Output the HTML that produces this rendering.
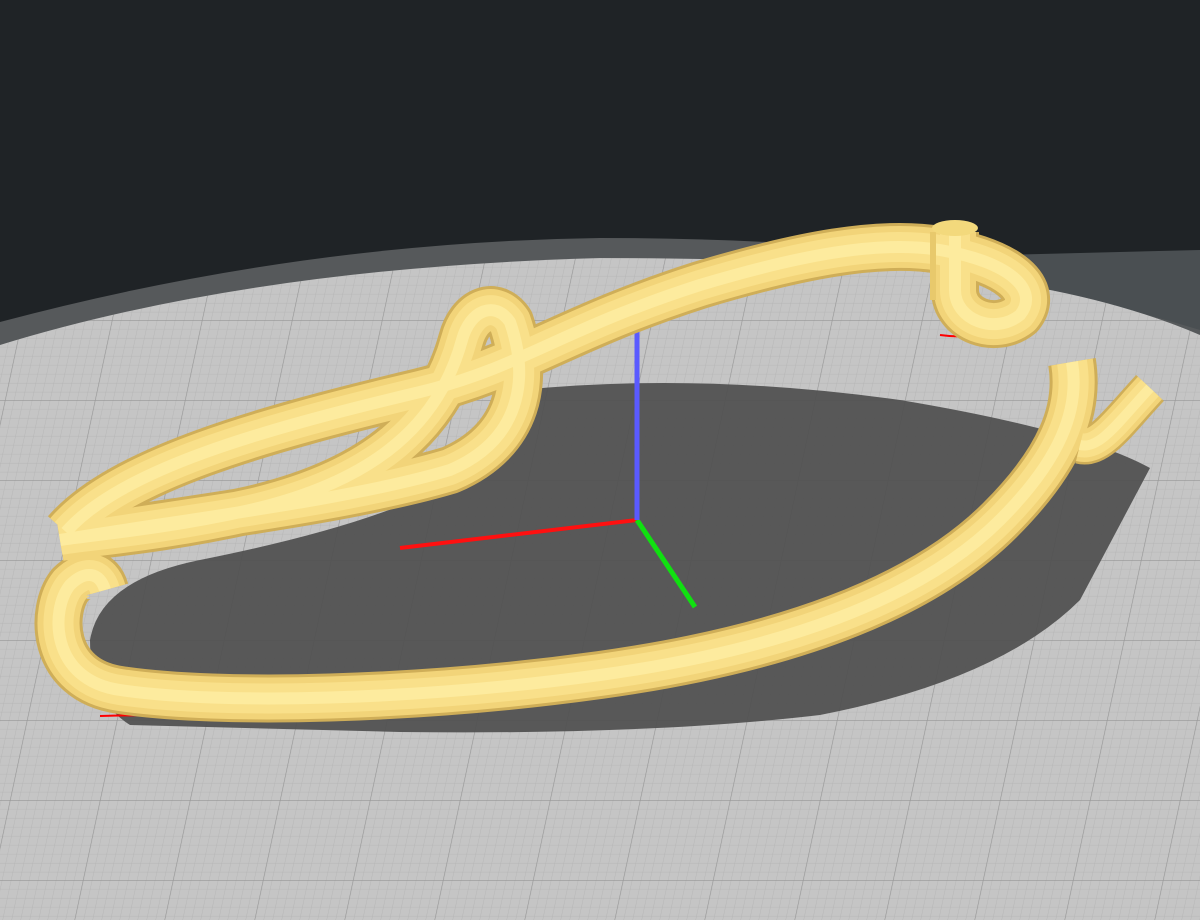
<!DOCTYPE html>
<html><head><meta charset="utf-8"><style>
html,body{margin:0;padding:0;background:#1f2326;width:1200px;height:920px;overflow:hidden}
svg{display:block}
</style></head><body>
<svg width="1200" height="920" viewBox="0 0 1200 920" xmlns="http://www.w3.org/2000/svg">
<defs>
<pattern id="minor" width="9" height="9" patternUnits="userSpaceOnUse">
<rect width="9" height="9" fill="#c5c5c5"/>
<path d="M0 0H9M0 0V9" stroke="#b6b6b6" stroke-width="1"/>
</pattern>
<pattern id="major" width="90" height="80" patternUnits="userSpaceOnUse" patternTransform="skewX(-12)">
<rect width="90" height="80" fill="url(#minor)"/>
<path d="M0 0H90M0 0V80" stroke="#969696" stroke-width="1.3"/>
</pattern>
</defs>
<rect width="1200" height="920" fill="#1f2326"/>
<path d="M0 322 Q300 242 600 238 Q900 238 1200 290 L1200 920 L0 920Z" fill="#56595b"/>
<path d="M1000 255 L1200 250 L1200 330 Q1100 300 1040 290Z" fill="#4a4f52"/>
<path d="M0 345 Q250 268 600 258 Q880 258 1040 288 Q1130 305 1200 335 L1200 920 L0 920Z" fill="url(#major)"/>
<!-- shadow -->
<path d="M520 390 Q700 372 900 400 Q1080 430 1150 468 L1080 600 Q1000 680 820 715 Q650 735 400 732 L130 725 Q90 700 90 640 Q100 580 200 560 Q400 520 470 470 Q520 430 520 390Z" fill="#505050" opacity="0.93"/>
<line x1="637" y1="520" x2="400" y2="548" stroke="#ff1010" stroke-width="4"/>
<line x1="637" y1="520" x2="695" y2="607" stroke="#10e010" stroke-width="5"/>
<line x1="637" y1="292" x2="637" y2="520" stroke="#5a5aff" stroke-width="5"/>
<defs>
<path id="p1" d="M66 532 C120 470 260 430 420 392 C520 368 560 330 700 285 C800 255 880 240 940 250 C1010 262 1040 290 1020 315 C995 335 955 320 955 290 L955 232"/>
<path id="p2" d="M60 540 C180 520 350 500 450 470 C520 440 530 380 510 322 C495 300 470 310 462 340 C440 420 380 480 250 510 C160 530 90 535 60 540"/>
<path id="p3" d="M1072 362 C1080 410 1060 460 1000 520 C920 600 780 650 600 675 C420 700 220 705 120 690 C50 680 50 610 70 585 C85 570 100 572 105 590"/>
<path id="p4" d="M1150 388 C1120 420 1100 450 1080 445"/>
</defs>
<path d="M100 716 Q300 712 500 704" stroke="#ff0000" stroke-width="2" fill="none"/>
<path d="M940 335 Q975 340 1010 328" stroke="#ff0000" stroke-width="2" fill="none"/>
<g fill="none" stroke-linejoin="round">
<use href="#p1" stroke="#cfae58" stroke-width="48"/>
<use href="#p2" stroke="#cfae58" stroke-width="48"/>
<use href="#p3" stroke="#cfae58" stroke-width="48"/>
<use href="#p4" stroke="#cfae58" stroke-width="38"/>
<use href="#p1" stroke="#f2d479" stroke-width="42"/>
<use href="#p2" stroke="#f2d479" stroke-width="42"/>
<use href="#p3" stroke="#f2d479" stroke-width="42"/>
<use href="#p4" stroke="#f2d479" stroke-width="33"/>
<use href="#p1" stroke="#f9e08a" stroke-width="30"/>
<use href="#p2" stroke="#f9e08a" stroke-width="30"/>
<use href="#p3" stroke="#f9e08a" stroke-width="30"/>
<use href="#p4" stroke="#f9e08a" stroke-width="24"/>
<use href="#p1" stroke="#fdeb9e" stroke-width="12"/>
<use href="#p2" stroke="#fdeb9e" stroke-width="12"/>
<use href="#p3" stroke="#fdeb9e" stroke-width="12"/>
<use href="#p4" stroke="#fdeb9e" stroke-width="10"/>
</g>
<path d="M933 232 L933 300" stroke="#e8c96c" stroke-width="6"/>
<ellipse cx="955" cy="228" rx="23" ry="8" fill="#f3d97c"/>
</svg>
</body></html>
